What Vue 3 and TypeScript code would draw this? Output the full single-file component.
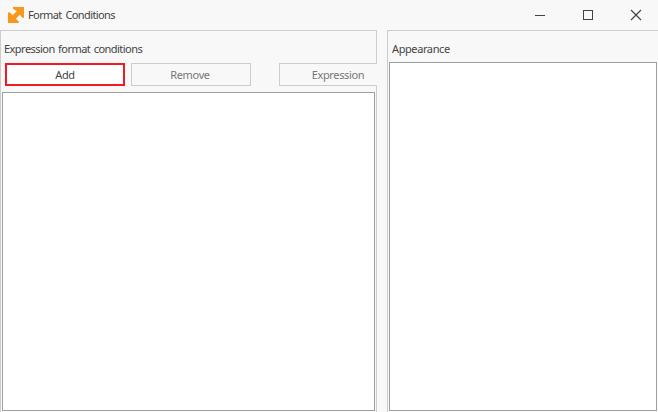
<script setup lang="ts">
interface ConditionAction {
  label: string
  enabled: boolean
  kind: 'add' | 'remove' | 'expression'
}

const actions: ConditionAction[] = [
  { label: 'Add', enabled: true, kind: 'add' },
  { label: 'Remove', enabled: false, kind: 'remove' },
  { label: 'Expression', enabled: false, kind: 'expression' },
]
</script>

<template>
  <div class="window">
    <header class="titlebar">
      <svg class="logo" width="16" height="16" viewBox="0 0 16 16" aria-hidden="true">
        <path fill="#f7981d" d="M5 0H16V10.8H14.4L11.8 7.8L7.8 11.8L10.8 14.4V16H0V5.4H2L4.6 8.2L8.8 4.2L5 1.8Z" />
      </svg>
      <h1 class="title">Format Conditions</h1>
      <nav class="controls">
        <button class="control" aria-label="Minimize">
          <svg width="12" height="12"><path d="M1 6.5H11" /></svg>
        </button>
        <button class="control" aria-label="Maximize">
          <svg width="12" height="12"><rect x="1.5" y="1.5" width="9" height="9" /></svg>
        </button>
        <button class="control" aria-label="Close">
          <svg width="12" height="12"><path class="cross" d="M1 1L11 11M11 1L1 11" /></svg>
        </button>
      </nav>
    </header>
    <main class="body">
      <section class="panel conditions">
        <h2 class="heading">Expression format conditions</h2>
        <div class="toolbar">
          <button
            v-for="action in actions"
            :key="action.kind"
            class="action"
            :class="action.kind"
            :disabled="!action.enabled"
          >{{ action.label }}</button>
        </div>
        <div class="list"></div>
      </section>
      <section class="panel appearance">
        <h2 class="heading">Appearance</h2>
        <div class="list"></div>
      </section>
    </main>
  </div>
</template>

<style>
body {
  margin: 0;
  background: #f8f8f8;
}
</style>

<style scoped>
.window {
  width: 658px;
  height: 412px;
  overflow: hidden;
  display: flex;
  flex-direction: column;
  background: #f8f8f8;
  color: #444;
  font: 11px/16px "Noto Sans", "Liberation Sans", sans-serif;
}
.titlebar {
  height: 30px;
  flex: none;
  display: flex;
  align-items: center;
  box-sizing: border-box;
  padding-left: 8px;
}
.logo {
  flex: none;
}
.title,
.heading {
  margin: 0;
  font-size: 11px;
  font-weight: 400;
  white-space: nowrap;
}
.title {
  margin-left: 4px;
  letter-spacing: -0.6px;
  word-spacing: 1.4px;
}
.controls {
  display: flex;
  margin-left: auto;
  margin-right: -2px;
}
.control {
  width: 48px;
  height: 30px;
  display: flex;
  align-items: center;
  justify-content: center;
  padding: 0;
  border: 0;
  background: none;
}
.control svg {
  fill: none;
  stroke: #444;
  stroke-width: 1;
}
.control .cross {
  stroke-width: 1.2;
}
.body {
  flex: 1;
  display: flex;
  gap: 10px;
}
.panel {
  box-sizing: border-box;
  height: 384px;
  display: flex;
  flex-direction: column;
  border: 1px solid #cdcdcd;
}
.conditions {
  width: 377px;
  flex: none;
  padding: 10px 1px 0;
}
.appearance {
  width: 274px;
  flex: none;
  padding: 10px 4px 0 1px;
}
.heading {
  height: 16px;
  padding-left: 2px;
  letter-spacing: -0.53px;
  word-spacing: 1px;
}
.appearance .heading {
  padding-left: 3px;
  letter-spacing: -0.4px;
}
.toolbar {
  display: flex;
  width: 372px;
  height: 23px;
  margin: 6px 0 6px 3px;
  overflow: hidden;
}
.action {
  box-sizing: border-box;
  width: 120px;
  height: 23px;
  flex: none;
  padding: 0 2px 0 0;
  border: 1px solid #cdcdcd;
  background: #f8f8f8;
  color: #777;
  font: inherit;
  letter-spacing: -0.35px;
}
.add {
  padding: 0;
  border: 2px solid #ed1c24;
  background: #fff;
  color: #444;
  letter-spacing: -0.3px;
}
.remove {
  margin-left: 6px;
}
.expression {
  margin-left: 28px;
}
.list {
  box-sizing: border-box;
  border: 1px solid #a0a0a0;
  background: #fff;
}
.conditions .list {
  width: 373px;
  height: 319px;
}
.appearance .list {
  width: 268px;
  height: 349px;
  margin-top: 5px;
}
</style>
